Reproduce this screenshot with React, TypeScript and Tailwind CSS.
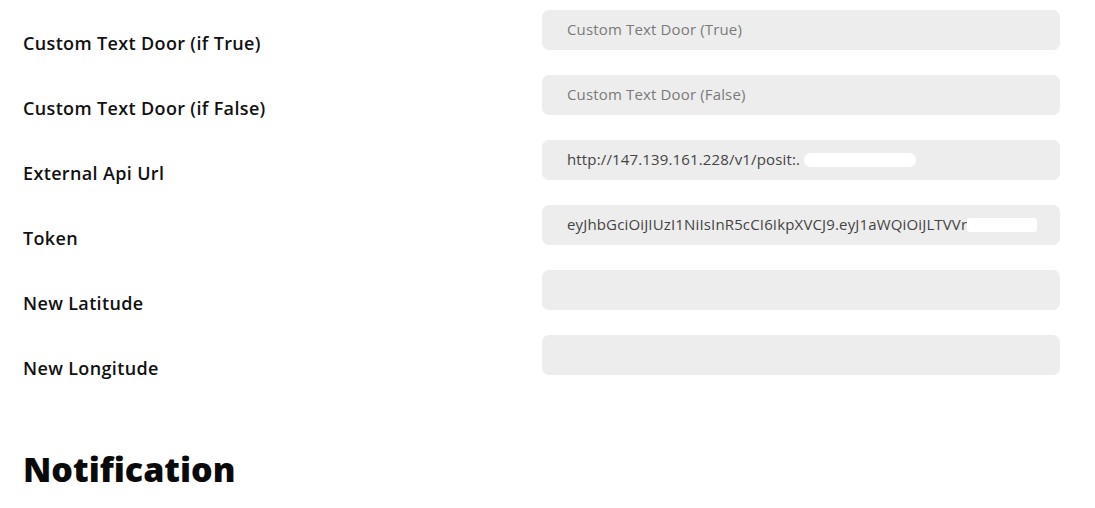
const rows: { label: string; value?: string; placeholder?: string; mask?: "url" | "token" }[] = [
  { label: "Custom Text Door (if True)", placeholder: "Custom Text Door (True)" },
  { label: "Custom Text Door (if False)", placeholder: "Custom Text Door (False)" },
  { label: "External Api Url", value: "http://147.139.161.228/v1/posit:.", mask: "url" },
  { label: "Token", value: "eyJhbGciOiJIUzI1NiIsInR5cCI6IkpXVCJ9.eyJ1aWQiOiJLTVVr", mask: "token" },
  { label: "New Latitude" },
  { label: "New Longitude" },
];

export default function App() {
  return (
    <div className="w-[1095px] h-[508px] bg-white overflow-hidden font-['Open_Sans',sans-serif]">
      <div className="flex flex-col">
        {rows.map((r) => (
          <div key={r.label} className="flex h-[65px]">
            <div className="w-[542px] pl-[23px] pt-[31px] text-[18px] leading-[24px] font-semibold text-[#111] tracking-[0.35px]">
              {r.label}
            </div>
            <div className="pt-[10px]">
              <div className="w-[518px] h-[40px] rounded-[7px] bg-[#ededed] flex items-center pl-[25px] pb-[1px] text-[15px] tracking-[0.15px] overflow-hidden whitespace-nowrap">
                {r.placeholder && <span className="text-[#7a7a7a]">{r.placeholder}</span>}
                {r.value && <span className="text-[#444]">{r.value}</span>}
                {r.mask === "url" && <span className="ml-[4px] inline-block w-[112px] h-[14px] rounded-full bg-white" />}
                {r.mask === "token" && <span className="ml-[0px] inline-block w-[70px] h-[14px] rounded-[3px] bg-white" />}
              </div>
            </div>
          </div>
        ))}
      </div>
      <h2 className="pl-[23px] mt-[59px] text-[34px] leading-[40px] font-extrabold text-[#0a0a0a]">Notification</h2>
    </div>
  );
}
